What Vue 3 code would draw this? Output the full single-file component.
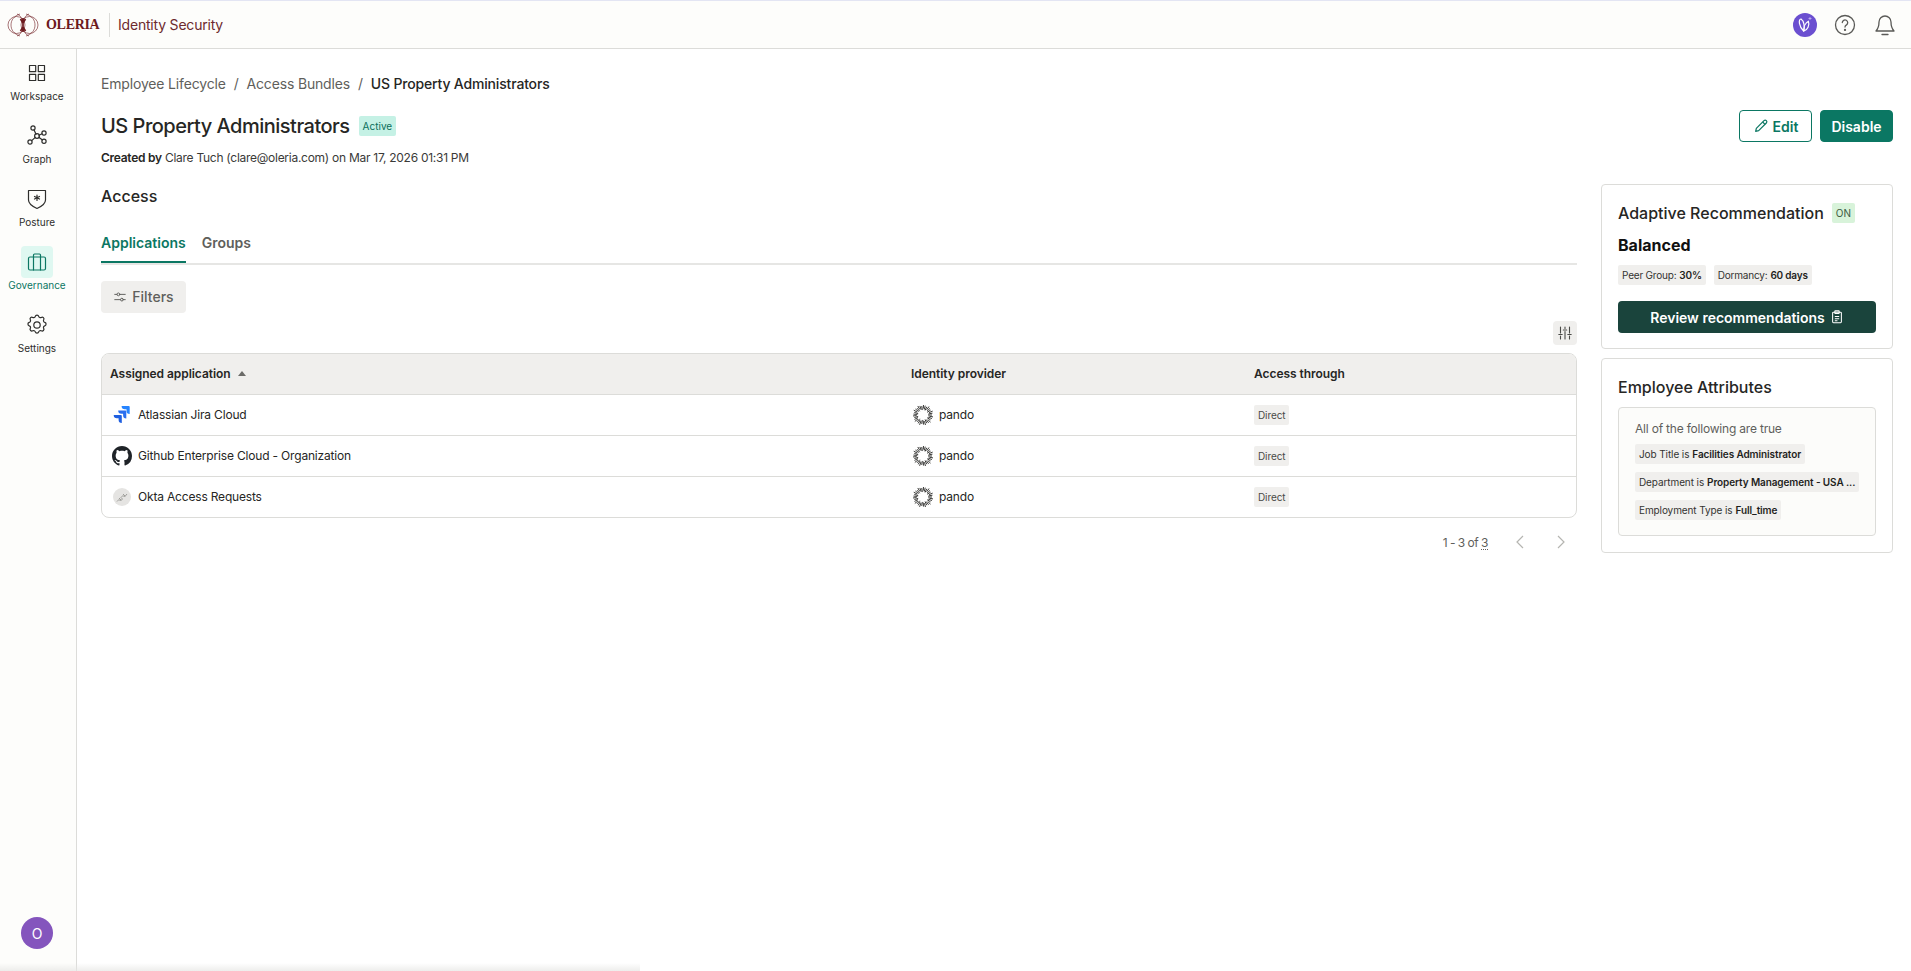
<template>
  <div class="app">
    <header class="topbar">
      <div class="brand">
        <svg class="brand-mark" viewBox="0 0 32 24" fill="none" stroke="#6d1a1e" stroke-width="0.6">
          <circle cx="9.500" cy="12" r="8.500" />
          <circle cx="22.500" cy="12" r="8.500" />
          <path d="M13 1C7 3 4 7 4 12s3 9 9 11" />
          <path d="M19 1c6 2 9 6 9 11s-3 9-9 11" />
          <path d="M10 1c3 1 5 4 6 8 1-4 3-7 6-8" />
          <path d="M10 23c3-1 5-4 6-8 1 4 3 7 6 8" />
          <path d="M16 5v14M13.500 6L16 10l2.500-4M13.500 18L16 14l2.500 4" stroke-width="1.700" />
        </svg>
        <span class="brand-name">OLERIA</span>
        <span class="brand-divider"></span>
        <span class="brand-product">Identity Security</span>
      </div>
      <div class="top-actions">
        <span class="ai-badge">
          <svg viewBox="0 0 24 24" width="24" height="24" fill="none" stroke="#fff" stroke-width="1.200">
            <path d="M8 6c-2.600.6-2.400 7 2.600 12 1.400-4.400.4-10-2.600-12z" />
            <path d="M15.400 8.400c-3 1.600-5 5.600-4.400 9.600 3.400-1 6-5.800 4.400-9.600z" />
            <path d="M17 4v3M15.500 5.500h3" stroke-width="0.800" stroke="#c9b8f5" />
          </svg>
        </span>
        <svg class="top-icon" viewBox="0 0 24 24" fill="none" stroke="#5a5a57" stroke-width="1.300" stroke-linecap="round">
          <circle cx="12" cy="12" r="9.500" />
          <path d="M9.300 9.600a2.700 2.700 0 1 1 4.200 2.300c-1 .6-1.500 1.100-1.500 2.200" />
          <circle cx="12" cy="16.900" r="0.500" fill="#5a5a57" />
        </svg>
        <svg class="top-icon" viewBox="0 0 24 24" fill="none" stroke="#5a5a57" stroke-width="1.300" stroke-linecap="round" stroke-linejoin="round">
          <path d="M6 9a6 6 0 0 1 12 0c0 4.500 1.200 7 3 9H3c1.800-2 3-4.500 3-9z" />
          <path d="M9 21.500h6" />
        </svg>
      </div>
    </header>

    <div class="body">
      <nav class="sidebar">
        <div v-for="item in navItems" :key="item.label" class="nav-item" :class="{ active: item.active }">
          <span class="nav-icon">
            <svg viewBox="0 0 24 24" width="24" height="24" fill="none" stroke="currentColor" stroke-width="1.200" stroke-linecap="round" stroke-linejoin="round">
              <path v-for="d in item.paths" :key="d" :d="d" />
              <circle v-for="c in item.circles" :key="c[0] + '-' + c[1]" :cx="c[0]" :cy="c[1]" :r="c[2]" />
            </svg>
          </span>
          <span class="nav-label">{{ item.label }}</span>
        </div>
        <span class="user-avatar">O</span>
      </nav>

      <main class="main">
        <div class="breadcrumb">
          <span>Employee Lifecycle</span>
          <span class="crumb-sep">/</span>
          <span>Access Bundles</span>
          <span class="crumb-sep">/</span>
          <span class="crumb-current">US Property Administrators</span>
        </div>

        <div class="title-row">
          <div class="title-left">
            <h1 class="page-title">US Property Administrators</h1>
            <span class="status-badge">Active</span>
          </div>
          <div class="title-actions">
            <button class="btn-outline">
              <svg viewBox="0 0 24 24" width="16" height="16" fill="none" stroke="currentColor" stroke-width="1.800" stroke-linejoin="round">
                <path d="M4 20l1-4.500L16.500 4a2.300 2.300 0 0 1 3.500 3.500L8.500 19 4 20z" />
                <path d="M14.500 6l3.500 3.500" />
              </svg>
              Edit
            </button>
            <button class="btn-solid">Disable</button>
          </div>
        </div>

        <p class="created"><strong>Created by</strong> Clare Tuch (clare@oleria.com) on Mar 17, 2026 01:31 PM</p>

        <div class="columns">
          <section class="content">
            <h2 class="section-title">Access</h2>
            <div class="tabs">
              <span class="tab tab-active">Applications</span>
              <span class="tab">Groups</span>
            </div>
            <button class="filters-btn">
              <svg viewBox="0 0 16 16" width="14" height="14" fill="none" stroke="currentColor" stroke-width="1.100" stroke-linecap="round">
                <path d="M2 5h2.500M8 5h6M2 11h6.500M12 11h2" />
                <circle cx="6.200" cy="5" r="1.600" />
                <circle cx="10.200" cy="11" r="1.600" />
              </svg>
              Filters
            </button>
            <div class="table-tools">
              <span class="columns-btn">
                <svg viewBox="0 0 16 16" width="16" height="16" fill="none" stroke="#4a4a47" stroke-width="1.100" stroke-linecap="round">
                  <path d="M3.500 2v6M3.500 11v3M8 2v1.500M8 6.500V14M12.500 2v6M12.500 11v3M1.800 9.500h3.400M6.300 5h3.400M10.800 9.500h3.400" />
                </svg>
              </span>
            </div>

            <div class="table">
              <div class="table-row table-head">
                <div class="cell">
                  Assigned application
                  <span class="sort-caret"></span>
                </div>
                <div class="cell">Identity provider</div>
                <div class="cell">Access through</div>
              </div>
              <div v-for="row in rows" :key="row.name" class="table-row">
                <div class="cell app-cell">
                  <svg v-if="row.icon === 'jira'" class="app-icon" viewBox="0 0 20 20">
                    <path d="M18.800 1H9.600a3.200 3.200 0 0 0 3.200 3.200h1.700v1.600a3.200 3.200 0 0 0 3.200 3.200V2a1 1 0 0 0-.9-1z" fill="#2684ff" />
                    <path d="M14.300 5.500H5.100a3.200 3.200 0 0 0 3.200 3.200H10v1.600a3.200 3.200 0 0 0 3.200 3.200V6.400a.9.900 0 0 0-.9-.9z" fill="#2a6fef" transform="translate(1.100 0)" />
                    <path d="M9.800 10H.6a3.200 3.200 0 0 0 3.200 3.200h1.700v1.600A3.200 3.200 0 0 0 8.700 18v-7.100a.9.900 0 0 0-.9-.9z" fill="#1f5fe0" transform="translate(1.100 0)" />
                  </svg>
                  <svg v-else-if="row.icon === 'github'" class="app-icon" viewBox="0 0 16 16" fill="#1f2328">
                    <path d="M8 0C3.580 0 0 3.580 0 8c0 3.540 2.290 6.530 5.470 7.590.4.070.55-.17.550-.38 0-.19-.01-.82-.01-1.490-2.010.37-2.530-.49-2.690-.94-.09-.23-.48-.94-.82-1.130-.28-.15-.68-.52-.01-.53.630-.01 1.080.58 1.230.82.720 1.210 1.870.87 2.330.66.070-.52.280-.87.510-1.070-1.780-.2-3.640-.89-3.640-3.950 0-.87.310-1.590.82-2.150-.08-.2-.36-1.020.08-2.120 0 0 .67-.21 2.200.82.640-.18 1.320-.27 2-.27s1.360.09 2 .27c1.530-1.040 2.200-.82 2.200-.82.440 1.100.160 1.920.080 2.120.51.560.82 1.270.82 2.150 0 3.070-1.870 3.750-3.650 3.950.29.250.54.730.54 1.480 0 1.070-.01 1.930-.01 2.200 0 .21.150.46.550.38A8.010 8.010 0 0 0 16 8c0-4.420-3.580-8-8-8z" />
                  </svg>
                  <svg v-else class="app-icon" viewBox="0 0 20 20">
                    <circle cx="10" cy="10" r="9" fill="#e5e4e2" />
                    <path d="M5 14.500l2-2 1.500 1.500 2-2-1.500-1.500 2-2 1.500 1.500 2.500-3M7 11l2 2M11 7l2 2" fill="none" stroke="#8c8c88" stroke-width="0.800" />
                  </svg>
                  {{ row.name }}
                </div>
                <div class="cell idp-cell">
                  <svg class="pando-icon" viewBox="0 0 20 20" stroke="#1f1f1d" stroke-width="0.900" stroke-linecap="round">
                    <line v-for="ray in pandoRays" :key="ray.x1" :x1="ray.x1" :y1="ray.y1" :x2="ray.x2" :y2="ray.y2" />
                  </svg>
                  pando
                </div>
                <div class="cell"><span class="chip chip-direct">Direct</span></div>
              </div>
            </div>

            <div class="pagination">
              <span class="page-count">1 - 3 of <span class="page-total">3</span></span>
              <svg viewBox="0 0 12 16" width="12" height="16" fill="none" stroke="#b5b5b1" stroke-width="1.200"><path d="M9 2L3 8l6 6" /></svg>
              <svg viewBox="0 0 12 16" width="12" height="16" fill="none" stroke="#b5b5b1" stroke-width="1.200"><path d="M3 2l6 6-6 6" /></svg>
            </div>
          </section>

          <aside class="side">
            <div class="card card-reco">
              <div class="card-head">
                <h3 class="card-title">Adaptive Recommendation</h3>
                <span class="on-badge">ON</span>
              </div>
              <div class="reco-name">Balanced</div>
              <div class="reco-chips">
                <span class="chip">Peer Group: <b>30%</b></span>
                <span class="chip">Dormancy: <b>60 days</b></span>
              </div>
              <button class="review-btn">
                Review recommendations
                <svg viewBox="0 0 16 16" width="14" height="14" fill="none" stroke="#fff" stroke-width="1.200">
                  <rect x="3" y="2.500" width="10" height="12" rx="1" />
                  <rect x="5.500" y="1" width="5" height="3" rx="0.500" />
                  <path d="M5.500 7.500h5M5.500 10h5M5.500 12.300h3" />
                </svg>
              </button>
            </div>

            <div class="card card-attrs">
              <h3 class="card-title">Employee Attributes</h3>
              <div class="attrs-box">
                <div class="attrs-caption">All of the following are true</div>
                <div class="attrs-list">
                  <span v-for="attr in attributes" :key="attr.key" class="chip attr-chip">{{ attr.key }} is <b>{{ attr.value }}</b></span>
                </div>
              </div>
            </div>
          </aside>
        </div>
      </main>
    </div>
    <div class="bottom-fade"></div>
  </div>
</template>

<script setup>
const navItems = [
  {
    label: 'Workspace',
    paths: ['M4.500 4.500h6.200v6.200H4.500zM13.300 4.500h6.200v6.200h-6.200zM4.500 13.300h6.200v6.200H4.500zM13.300 13.300h6.200v6.200h-6.200z'],
    circles: []
  },
  {
    label: 'Graph',
    paths: ['M9 5.800l2 4.500M14 11.300l3-1.500M13.800 13.200l3.300 2.600M10.300 13.400l-3.600 3.200'],
    circles: [[8, 4, 2.1], [12, 12, 2.4], [19, 9, 2.1], [19, 17.300, 2.1], [5, 18, 2.1]]
  },
  {
    label: 'Posture',
    paths: [
      'M3.500 3.500h17V13c0 4-4 6.500-8.500 8.500C7.500 19.500 3.500 17 3.500 13z',
      'M12 8v5.500M9.500 9.500l5 2.500M14.500 9.500l-5 2.500'
    ],
    circles: []
  },
  {
    label: 'Governance',
    active: true,
    paths: [
      'M3.500 8.500a1.500 1.500 0 0 1 1.500-1.500h14a1.500 1.500 0 0 1 1.500 1.500v10a1.500 1.500 0 0 1-1.500 1.500H5a1.500 1.500 0 0 1-1.500-1.500z',
      'M8.500 7V20M15.500 7V20M8.500 7V5a1 1 0 0 1 1-1h5a1 1 0 0 1 1 1v2'
    ],
    circles: []
  },
  {
    label: 'Settings',
    paths: [
      'M10.300 3.300c.4-1.700 3-1.700 3.400 0a1.750 1.750 0 0 0 2.600 1.100c1.500-.9 3.300.9 2.400 2.400a1.750 1.750 0 0 0 1.100 2.600c1.700.4 1.700 3 0 3.400a1.750 1.750 0 0 0-1.100 2.600c.9 1.500-.9 3.300-2.400 2.400a1.750 1.750 0 0 0-2.600 1.100c-.4 1.700-3 1.700-3.400 0a1.750 1.750 0 0 0-2.600-1.100c-1.500.9-3.300-.9-2.400-2.400a1.750 1.750 0 0 0-1.100-2.600c-1.700-.4-1.700-3 0-3.400a1.750 1.750 0 0 0 1.100-2.600c-.9-1.500.9-3.300 2.400-2.400a1.750 1.750 0 0 0 2.600-1.100z'
    ],
    circles: [[12, 12, 3.2]]
  }
];

const rows = [
  { name: 'Atlassian Jira Cloud', icon: 'jira' },
  { name: 'Github Enterprise Cloud - Organization', icon: 'github' },
  { name: 'Okta Access Requests', icon: 'okta' }
];

const attributes = [
  { key: 'Job Title', value: 'Facilities Administrator' },
  { key: 'Department', value: 'Property Management - USA ...' },
  { key: 'Employment Type', value: 'Full_time' }
];

// sunburst logo for pando, ray lengths vary so no solid ring forms
const pandoRays = Array.from({ length: 33 }, (_, i) => {
  const a = (i / 33) * Math.PI * 2;
  const inner = [5.4, 6.8, 6][i % 3];
  const outer = [8.6, 10, 9.2][i % 3];
  return {
    x1: (10 + Math.cos(a) * inner).toFixed(2),
    y1: (10 + Math.sin(a) * inner).toFixed(2),
    x2: (10 + Math.cos(a) * outer).toFixed(2),
    y2: (10 + Math.sin(a) * outer).toFixed(2)
  };
});
</script>

<style>
html, body { margin: 0; background: #fff; }
</style>

<style scoped>
.app, .app * { box-sizing: border-box; }
.app {
  position: relative;
  display: flex;
  flex-direction: column;
  height: 971px;
  overflow: hidden;
  font-family: Inter, "Noto Sans", sans-serif;
  color: #262624;
  background: #fff;
}

/* top bar */
.topbar {
  display: flex;
  align-items: center;
  justify-content: space-between;
  height: 49px;
  padding: 0 14px 0 7px;
  flex-shrink: 0;
  background: #fdfdfb;
  border-top: 1px solid #e3e5f3;
  border-bottom: 1px solid #dcdcd9;
}
.brand { display: flex; align-items: center; }
.brand-mark { width: 32px; height: 24px; }
.brand-name {
  width: 55px;
  margin-left: 7px;
  font-family: "Liberation Serif", serif;
  font-size: 14px;
  font-weight: 700;
  letter-spacing: -0.3px;
  color: #6d1a1e;
}
.brand-divider { width: 1px; height: 24px; margin: 0 8px; background: #dcdcd9; }
.brand-product { font-size: 14px; letter-spacing: -0.2px; color: #6d2a2e; }
.top-actions { display: flex; align-items: center; gap: 16px; }
.ai-badge {
  display: flex;
  width: 24px;
  height: 24px;
  border-radius: 50%;
  background: #6b4fd0;
}
.top-icon { width: 24px; height: 24px; }

/* sidebar */
.body { display: flex; flex: 1; min-height: 0; }
.sidebar {
  display: flex;
  flex-direction: column;
  align-items: center;
  width: 77px;
  padding: 8px 2px 0 0;
  flex-shrink: 0;
  background: #fdfdfb;
  border-right: 1px solid #dcdcd9;
}
.nav-item {
  display: flex;
  flex-direction: column;
  align-items: center;
  height: 63px;
  color: #2e2e2c;
}
.nav-icon {
  display: flex;
  align-items: center;
  justify-content: center;
  width: 32px;
  height: 32px;
  flex-shrink: 0;
  border-radius: 4px;
}
.nav-label { margin-top: -1px; font-size: 10px; line-height: 16px; }
.nav-item.active { color: #0b7763; }
.nav-item.active .nav-icon { background: #dff8f1; }
.user-avatar {
  display: flex;
  align-items: center;
  justify-content: center;
  width: 32px;
  height: 32px;
  margin-top: auto;
  margin-bottom: 22px;
  border-radius: 50%;
  background: #8455bd;
  color: #fff;
  font-size: 14px;
}

/* main */
.main { flex: 1; min-width: 0; padding: 25px 18px 0 24px; }
.breadcrumb { display: flex; gap: 8px; font-size: 14px; line-height: 20px; letter-spacing: -0.17px; color: #5f5f5c; }
.crumb-current { color: #262624; font-weight: 500; }
.title-row { display: flex; align-items: center; justify-content: space-between; margin-top: 16px; height: 32px; }
.title-left { display: flex; align-items: center; gap: 9px; }
.page-title { margin: 0; font-size: 20px; font-weight: 500; letter-spacing: -0.5px; }
.status-badge {
  padding: 0 4px;
  font-size: 10px;
  line-height: 20px;
  border-radius: 2px;
  background: #c5f1e5;
  color: #0b6e5b;
}
.title-actions { display: flex; gap: 8px; }
.btn-outline, .btn-solid {
  display: flex;
  align-items: center;
  justify-content: center;
  gap: 4px;
  width: 73px;
  height: 32px;
  padding: 0;
  font-family: inherit;
  font-size: 14px;
  font-weight: 600;
  border-radius: 4px;
}
.btn-outline { background: #fff; border: 1px solid #0b7763; color: #0b7763; }
.btn-solid { background: #0b7763; border: 1px solid #0b7763; color: #fff; }
.created { margin: 8px 0 0; font-size: 12px; line-height: 16px; letter-spacing: -0.27px; color: #3a3a38; }
.created strong { font-weight: 600; color: #262624; }

.columns { display: flex; gap: 24px; margin-top: 18px; align-items: flex-start; }
.content { flex: 1; min-width: 0; }
.section-title { margin: 0; font-size: 16px; font-weight: 500; line-height: 24px; }

.tabs { display: flex; gap: 16px; margin-top: 25px; border-bottom: 2px solid #e6e6e4; }
.tab {
  padding-bottom: 8px;
  border-bottom: 2px solid transparent;
  font-size: 14px;
  font-weight: 600;
  line-height: 20px;
  color: #5f5f5c;
}
.tab-active { border-bottom-color: #0b7763; color: #0b7763; }

.filters-btn {
  display: flex;
  align-items: center;
  justify-content: center;
  gap: 5px;
  width: 85px;
  height: 32px;
  margin-top: 16px;
  padding: 0 0 1px;
  border: 0;
  border-radius: 4px;
  background: #f0efed;
  color: #5f5f5c;
  font-family: inherit;
  font-size: 14px;
  font-weight: 500;
}
.table-tools { display: flex; justify-content: flex-end; margin-top: 8px; }
.columns-btn {
  display: flex;
  align-items: center;
  justify-content: center;
  width: 24px;
  height: 24px;
  border-radius: 4px;
  background: #f0efed;
}

.table { margin-top: 8px; border: 1px solid #dcdcd9; border-radius: 8px; overflow: hidden; }
.table-row {
  display: grid;
  grid-template-columns: 801px 343px 1fr;
  height: 41px;
  border-top: 1px solid #dcdcd9;
}
.table-row:first-child { border-top: 0; height: 40px; }
.table-head { background: #f0efed; }
.cell { display: flex; align-items: center; padding: 0 0 1px 8px; font-size: 12px; letter-spacing: -0.18px; }
.table-head .cell { font-weight: 600; letter-spacing: -0.05px; }
.sort-caret {
  width: 0;
  height: 0;
  margin-left: 7px;
  border-left: 4px solid transparent;
  border-right: 4px solid transparent;
  border-bottom: 5px solid #6b6b68;
}
.app-cell { gap: 6px; padding-left: 10px; }
.app-icon { width: 20px; height: 20px; flex-shrink: 0; }
.idp-cell { gap: 6px; padding-left: 10px; }
.pando-icon { width: 20px; height: 20px; }

.chip {
  display: inline-flex;
  align-items: center;
  gap: 3px;
  height: 20px;
  padding: 0 4px;
  border-radius: 2px;
  background: #f0efed;
  font-size: 10px;
  letter-spacing: -0.1px;
  white-space: nowrap;
  color: #333331;
}
.chip b { font-weight: 600; color: #1f1f1d; }
.chip-direct { color: #4a4a47; }

.pagination {
  display: flex;
  align-items: center;
  justify-content: flex-end;
  gap: 29px;
  height: 16px;
  margin-top: 16px;
  padding-right: 10px;
  color: #5f5f5c;
  font-size: 12px;
  letter-spacing: -0.5px;
}
.page-count { margin-right: -3px; }
.page-total { text-decoration: underline dotted; text-underline-offset: 2px; }

/* right rail */
.side { display: flex; flex-direction: column; gap: 9px; width: 292px; flex-shrink: 0; }
.card { padding: 16px; border: 1px solid #dcdcd9; border-radius: 4px; background: #fff; }
.card-reco { height: 165px; }
.card-attrs { height: 195px; }
.card-head { display: flex; align-items: center; gap: 8px; height: 24px; }
.card-title { margin: 0; font-size: 16px; font-weight: 500; letter-spacing: 0; line-height: 24px; }
.on-badge {
  padding: 0 4px;
  font-size: 10px;
  line-height: 20px;
  border-radius: 2px;
  background: #d8f3da;
  color: #3b5a41;
}
.reco-name { margin-top: 8px; font-size: 16px; font-weight: 700; line-height: 24px; color: #111; }
.reco-chips { display: flex; gap: 8px; margin-top: 8px; }
.reco-chips .chip { letter-spacing: -0.2px; }
.review-btn {
  display: flex;
  align-items: center;
  justify-content: center;
  gap: 5px;
  width: 100%;
  height: 32px;
  margin-top: 16px;
  border: 0;
  border-radius: 4px;
  background: #1a443c;
  color: #fff;
  font-family: inherit;
  font-size: 14px;
  font-weight: 600;
}
.attrs-box {
  height: 129px;
  margin-top: 8px;
  padding: 13px 16px;
  border: 1px solid #dcdcd9;
  border-radius: 4px;
  background: #fcfcfa;
}
.attrs-caption { font-size: 12px; line-height: 16px; letter-spacing: -0.2px; color: #5f5f5c; }
.attrs-list { display: flex; flex-direction: column; align-items: flex-start; gap: 8px; margin-top: 7px; }
.attr-chip { max-width: 224px; }

.bottom-fade {
  position: absolute;
  left: 0;
  bottom: 0;
  width: 640px;
  height: 8px;
  background: linear-gradient(to bottom, rgba(230, 230, 228, 0), rgba(230, 230, 228, 0.7));
  pointer-events: none;
}
</style>
